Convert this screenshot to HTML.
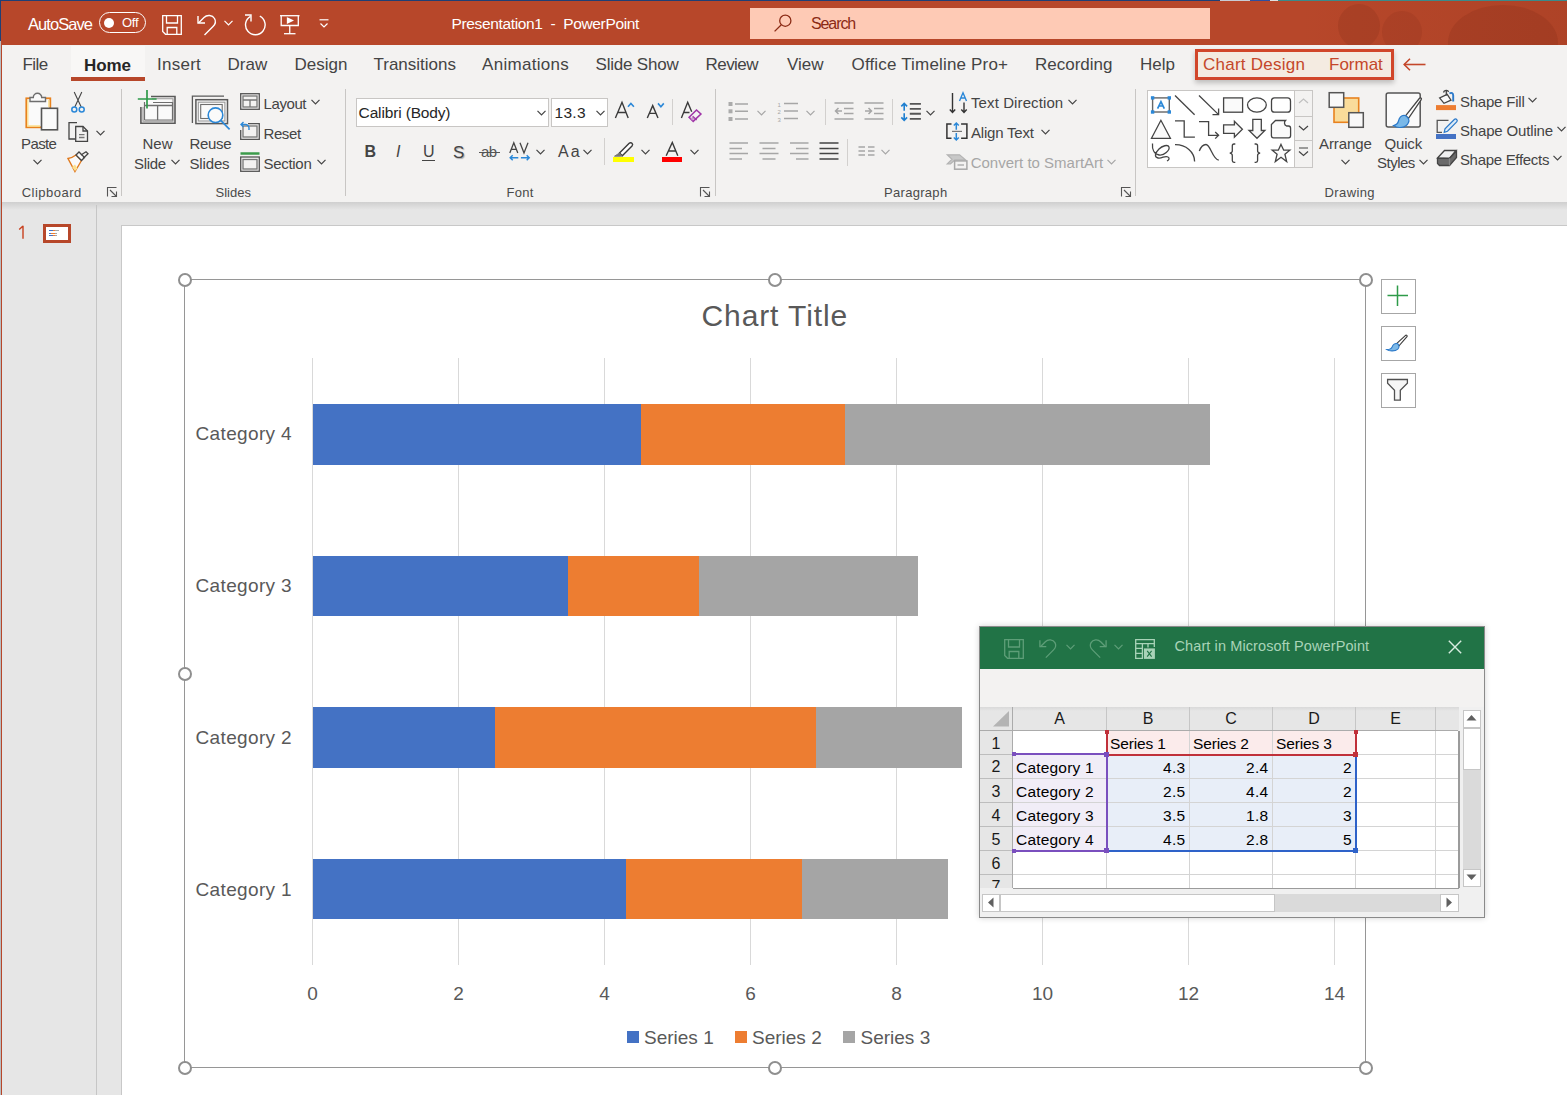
<!DOCTYPE html>
<html><head><meta charset="utf-8">
<style>
*{box-sizing:border-box}
html,body{margin:0;padding:0}
body{width:1567px;height:1095px;overflow:hidden;position:relative;background:#E6E6E6;font-family:"Liberation Sans",sans-serif;color:#262626}
.a{position:absolute}
.t{position:absolute;white-space:nowrap;line-height:1}
svg{position:absolute;overflow:visible}
#title{left:0;top:0;width:1567px;height:45px;background:#B7472A}
#tabs{left:2px;top:45px;width:1565px;height:40px;background:#F3F2F1}
#ribbon{left:2px;top:85px;width:1565px;height:117px;background:#F3F2F1}
.tab{position:absolute;top:56px;font-size:17px;color:#444;white-space:nowrap;line-height:1}
.rl{position:absolute;font-size:15px;color:#444;white-space:nowrap;line-height:1}
.gl{position:absolute;top:186px;font-size:13px;color:#4A4A4A;white-space:nowrap;line-height:1}
.sep{position:absolute;width:1px;background:#C8C6C4}
</style></head>
<body>
<!-- title bar -->
<div class="a" id="title"></div>
<div class="a" style="left:0;top:0;width:1567px;height:1px;background:#1E3F75"></div>
<div class="a" style="left:1220px;top:0;width:30px;height:1px;background:#C8CCD4"></div>
<div class="a" style="left:1250px;top:0;width:20px;height:1px;background:#2D4FA0"></div>
<div class="a" style="left:1270px;top:0;width:8px;height:1px;background:#E0E0E0"></div>
<div class="a" style="left:1278px;top:0;width:289px;height:1px;background:#3A8A8A"></div>
<div class="a" style="left:0;top:0;width:1px;height:41px;background:#1E3F75"></div>
<div class="a" style="left:0;top:41px;width:1px;height:1054px;background:#B9BDC0"></div>
<div class="a" style="left:1px;top:1px;width:1px;height:1094px;background:#B7472A"></div>


<!-- title blobs -->
<div class="a" style="left:1300px;top:1px;width:267px;height:44px;overflow:hidden">
 <div class="a" style="left:0;top:0;width:267px;height:44px;background:linear-gradient(90deg,rgba(110,35,15,0) 0,rgba(110,35,15,0.05) 40%,rgba(110,35,15,0.12) 100%)"></div>
 <div class="a" style="left:38px;top:3px;width:42px;height:44px;border-radius:50%;background:rgba(110,35,15,0.17)"></div>
 <div class="a" style="left:82px;top:10px;width:40px;height:42px;border-radius:50%;background:rgba(110,35,15,0.12)"></div>
 <div class="a" style="left:148px;top:4px;width:110px;height:75px;border-radius:50%;background:rgba(110,35,15,0.17)"></div>
</div>
<div class="t" style="left:28px;top:15.5px;font-size:16.5px;letter-spacing:-0.95px;color:#fff">AutoSave</div>
<div class="a" style="left:99px;top:12px;width:47px;height:21px;border:1.5px solid #fff;border-radius:11px"></div>
<div class="a" style="left:104px;top:17.5px;width:10px;height:10px;border-radius:50%;background:#fff"></div>
<div class="t" style="left:122px;top:16px;font-size:13px;color:#fff;letter-spacing:-0.3px">Off</div>
<!-- save -->
<svg style="left:162px;top:15px" width="20" height="20" viewBox="0 0 20 20" fill="none" stroke="#fff" stroke-width="1.3">
 <path d="M0.7 0.7H19.3V19.3H3.5L0.7 16.5Z"/><path d="M4.5 0.7V8H15.5V0.7"/><path d="M5.2 19.3V12.5H14.8V19.3"/>
</svg>
<!-- undo -->
<svg style="left:197px;top:15px" width="22" height="20" viewBox="0 0 22 20" fill="none" stroke="#fff" stroke-width="1.4">
 <path d="M1 1V8H8"/><path d="M1.5 8L7 2.5C10 -0.5 15.5 0 17.5 3.5C19 6 18.5 9 16 11.5L7.5 20"/>
</svg>
<svg style="left:224px;top:20px" width="9" height="6" viewBox="0 0 9 6" fill="none" stroke="#fff" stroke-width="1.2"><path d="M0.5 0.8L4.5 4.8L8.5 0.8"/></svg>
<!-- redo -->
<svg style="left:244px;top:14px" width="22" height="22" viewBox="0 0 22 22" fill="none" stroke="#fff" stroke-width="1.4">
 <path d="M15.8 2.2A9.8 9.8 0 1 1 6.5 2.4"/><path d="M1 1H7V7.5"/>
</svg>
<!-- present -->
<svg style="left:280px;top:15px" width="20" height="20" viewBox="0 0 20 20" fill="none" stroke="#fff" stroke-width="1.3">
 <path d="M0 0.7H19.5"/><path d="M1.2 0.7V10.5H18.3V0.7"/><path d="M9.75 10.5V18.5"/><path d="M4 18.7H15.5"/><path d="M7.5 3.2L12.5 5.6L7.5 8Z" fill="#fff"/>
</svg>
<svg style="left:319px;top:19px" width="10" height="10" viewBox="0 0 10 10" fill="none" stroke="#fff" stroke-width="1.2"><path d="M0.5 0.8H9.5"/><path d="M1.5 4.5L5 8L8.5 4.5"/></svg>
<div class="t" style="left:451.5px;top:16px;font-size:15.5px;letter-spacing:-0.35px;color:#fff">Presentation1&nbsp; - &nbsp;PowerPoint</div>
<!-- search -->
<div class="a" style="left:750px;top:8px;width:460px;height:31px;background:#FECAB5"></div>
<svg style="left:774px;top:14px" width="18" height="18" viewBox="0 0 18 18" fill="none" stroke="#8B2A14" stroke-width="1.3"><circle cx="11.3" cy="6.7" r="5.6"/><path d="M7.3 10.7L0.6 17.4"/></svg>
<div class="t" style="left:811px;top:16px;font-size:16px;letter-spacing:-1.1px;color:#8B2A14">Search</div>

<!-- tabs -->
<div class="a" id="tabs"></div>
<div class="a" id="ribbon"></div>

<div class="a" style="left:71px;top:46px;width:74px;height:31px;background:#F8F7F6"></div>
<div class="a" style="left:71px;top:77px;width:74px;height:4px;background:#B7472A"></div>
<div class="tab" style="left:22.5px;letter-spacing:-0.6px">File</div>
<div class="tab" style="left:84px;top:56.5px;color:#262626;font-weight:bold;font-size:17px;letter-spacing:-0.1px">Home</div>
<div class="tab" style="left:157px;letter-spacing:0.25px">Insert</div>
<div class="tab" style="left:227.5px">Draw</div>
<div class="tab" style="left:294.5px">Design</div>
<div class="tab" style="left:373.5px">Transitions</div>
<div class="tab" style="left:482px;letter-spacing:0.3px">Animations</div>
<div class="tab" style="left:595.5px;letter-spacing:-0.2px">Slide Show</div>
<div class="tab" style="left:705.5px;letter-spacing:-0.55px">Review</div>
<div class="tab" style="left:787px">View</div>
<div class="tab" style="left:851.5px;letter-spacing:0.17px">Office Timeline Pro+</div>
<div class="tab" style="left:1035px">Recording</div>
<div class="tab" style="left:1140px">Help</div>
<div class="a" style="left:1195px;top:49px;width:199px;height:31px;border:3px solid #D1462A;background:#F4EBE1;box-shadow:0 3px 5px rgba(0,0,0,0.22)"></div>
<div class="tab" style="left:1203px;color:#C4472A;letter-spacing:0.25px">Chart Design</div>
<div class="tab" style="left:1329px;color:#C4472A">Format</div>
<svg style="left:1403px;top:58px" width="23" height="13" viewBox="0 0 23 13" fill="none" stroke="#C4472A" stroke-width="1.6"><path d="M1 6.5H22.5"/><path d="M7 0.8L1.2 6.5L7 12.2"/></svg>

<div class="a" style="left:2px;top:202px;width:1565px;height:8px;background:linear-gradient(#CFCFCF,#E6E6E6)"></div>


<!-- ===== RIBBON: Clipboard ===== -->
<svg style="left:24px;top:91px" width="36" height="40" viewBox="0 0 36 40" fill="none">
 <rect x="2.3" y="7.3" width="24" height="29" stroke="#E8821E" stroke-width="1.8" fill="#FAFAFA"/>
 <path d="M3.8 9V35H16" stroke="#FCE08F" stroke-width="1.3"/>
 <path d="M24.8 9V16" stroke="#FCE08F" stroke-width="1.3"/>
 <path d="M6 10.5V6.5H9.3A4.2 4.2 0 0 1 17.7 6.5H21.5V10.5Z" stroke="#6E6E6E" fill="#FAFAFA" stroke-width="1.4"/>
 <rect x="17.5" y="17.3" width="16" height="21.5" stroke="#555" fill="#FAFAFA" stroke-width="1.6"/>
</svg>
<!-- scissors -->
<svg style="left:70px;top:91px" width="16" height="22" viewBox="0 0 16 22" fill="none" stroke-width="1.1">
 <path d="M4.2 1L11.2 16M11.8 1L4.8 16" stroke="#444"/>
 <circle cx="4.3" cy="18.5" r="2.5" stroke="#2B88D8" stroke-width="1.5"/><circle cx="11.7" cy="18.5" r="2.5" stroke="#2B88D8" stroke-width="1.5"/>
</svg>
<!-- copy -->
<svg style="left:68px;top:122px" width="22" height="21" viewBox="0 0 22 21" fill="none" stroke="#444" stroke-width="1.3">
 <path d="M9 0.7H1V17H7"/><path d="M7.7 4.5H15L19.5 9V19.3H7.7Z" fill="#F3F2F1"/><path d="M15 4.5V9H19.5"/><path d="M11 12.7H16.5M11 15.5H16.5" stroke="#777"/>
</svg>
<svg style="left:96px;top:130px" width="9" height="6" viewBox="0 0 9 6" fill="none" stroke="#444" stroke-width="1.2"><path d="M0.5 0.8L4.5 4.8L8.5 0.8"/></svg>
<!-- format painter -->
<svg style="left:67px;top:151px" width="22" height="22" viewBox="0 0 22 22" fill="none" stroke-width="1.3">
 <path d="M1 7.5C4 7 7 5.5 9 4L14.5 9.5C13 12 12 14 8 20.5Z" stroke="#E07A1E" fill="#FAFAFA" stroke-width="1.4"/>
 <path d="M5 16L8 13.5L10.5 17.5L8 20Z" fill="#FCE08F" stroke="none"/>
 <path d="M9 4L12 1L17.5 6.5L14.5 9.5Z" stroke="#444" fill="#FAFAFA"/>
 <path d="M14 4L19 0.8L21 2.8L16 7.5" stroke="#444"/>
</svg>
<div class="rl" style="left:21px;top:136px;font-size:15px;letter-spacing:-0.6px">Paste</div>
<svg style="left:33px;top:159px" width="9" height="6" viewBox="0 0 9 6" fill="none" stroke="#444" stroke-width="1.2"><path d="M0.5 0.8L4.5 4.8L8.5 0.8"/></svg>
<div class="gl" style="left:21.7px;top:185.8px;letter-spacing:0.5px">Clipboard</div>
<svg style="left:107px;top:187px" width="10" height="10" viewBox="0 0 10 10" fill="none" stroke="#555" stroke-width="1.1"><path d="M0.5 9.5V0.5H9.5"/><path d="M3 3L9 9M9.5 4.5V9.5H4.5"/></svg>
<div class="sep" style="left:121px;top:89px;height:107px"></div>

<!-- ===== RIBBON: Slides ===== -->
<svg style="left:136px;top:89px" width="42" height="38" viewBox="0 0 42 38" fill="none" stroke-width="1.4">
 <path d="M15 7.5H39V34.3H4.9V18" stroke="#5A5A5A" stroke-width="1.6"/>
 <path d="M16 9.7H37V32.2H7V18" stroke="#9A9A9A" stroke-width="1.1"/>
 <rect x="8.3" y="10.8" width="27.5" height="20.3" fill="#FAFAFA" stroke="none"/>
 <path d="M8.5 16.5H36M21.6 16.5V31" stroke="#6E6E6E" stroke-width="1.3"/>
 <path d="M8.5 31V13M17 13.5H36.5V31H8.5" stroke="#6E6E6E" stroke-width="1.2"/>
 <path d="M11 1V19.5M1.8 10H20.6" stroke="#2E9B49" stroke-width="1.7"/>
</svg>
<div class="rl" style="left:142.5px;top:136px;font-size:15px">New</div>
<div class="rl" style="left:134px;top:155.5px;font-size:15px;letter-spacing:-0.3px">Slide</div>
<svg style="left:171px;top:159px" width="9" height="6" viewBox="0 0 9 6" fill="none" stroke="#444" stroke-width="1.2"><path d="M0.5 0.8L4.5 4.8L8.5 0.8"/></svg>
<svg style="left:190px;top:93px" width="42" height="40" viewBox="0 0 42 40" fill="none" stroke="#5A5A5A" stroke-width="1.4">
 <path d="M2.4 30V3.2H34" stroke-width="1.3"/>
 <rect x="5.9" y="6.7" width="31.6" height="23.9" fill="#F8F8F8" stroke-width="1.5"/>
 <rect x="8.3" y="9.2" width="26.6" height="18.8" stroke="#9A9A9A" stroke-width="1.1" fill="#FAFAFA"/>
 <rect x="10.7" y="11.5" width="21.5" height="14" stroke="#6E6E6E" stroke-width="1.1"/>
 <circle cx="25.5" cy="22.2" r="7.3" stroke="#2B88D8" stroke-width="1.6" fill="#FAFAFA"/><path d="M30.7 27.4L39.6 36.4" stroke="#2B88D8" stroke-width="1.7"/>
</svg>
<div class="rl" style="left:189.5px;top:136px;font-size:15px;letter-spacing:-0.3px">Reuse</div>
<div class="rl" style="left:189.5px;top:155.5px;font-size:15px;letter-spacing:-0.15px">Slides</div>
<svg style="left:240px;top:93px" width="20" height="17" viewBox="0 0 20 17" fill="none" stroke="#555" stroke-width="1.3"><rect x="0.7" y="0.7" width="18.6" height="15.6"/><rect x="3" y="3" width="14" height="11" stroke="#777"/><path d="M3 7H17M10 7V14" stroke="#777"/></svg>
<div class="rl" style="left:263.5px;top:96px;font-size:15px;letter-spacing:-0.4px">Layout</div>
<svg style="left:311px;top:99px" width="9" height="6" viewBox="0 0 9 6" fill="none" stroke="#444" stroke-width="1.2"><path d="M0.5 0.8L4.5 4.8L8.5 0.8"/></svg>
<svg style="left:240px;top:121px" width="20" height="19" viewBox="0 0 20 19" fill="none" stroke="#555" stroke-width="1.3"><path d="M8 2.7H19.3V18.3H0.7V9"/><rect x="3" y="5" width="14" height="11" stroke="#777"/><path d="M3.5 1L1 3.5L3.5 6M1.5 3.5H5.5A3.5 3.5 0 0 1 9 7V9" stroke="#2B88D8" stroke-width="1.4"/></svg>
<div class="rl" style="left:263.5px;top:126px;font-size:15px;letter-spacing:-0.4px">Reset</div>
<svg style="left:240px;top:152px" width="20" height="20" viewBox="0 0 20 20" fill="none" stroke="#555" stroke-width="1.3"><path d="M0.5 1.5H19.5" stroke="#3C9B4B" stroke-width="2.5"/><rect x="0.7" y="5" width="18.6" height="14.3"/><rect x="3" y="7.5" width="14" height="9.5" stroke="#777"/></svg>
<div class="rl" style="left:263.5px;top:155.5px;font-size:15px;letter-spacing:-0.3px">Section</div>
<svg style="left:317px;top:159px" width="9" height="6" viewBox="0 0 9 6" fill="none" stroke="#444" stroke-width="1.2"><path d="M0.5 0.8L4.5 4.8L8.5 0.8"/></svg>
<div class="gl" style="left:215.5px;top:185.8px">Slides</div>
<div class="sep" style="left:345px;top:89px;height:107px"></div>


<!-- ===== RIBBON: Font ===== -->
<div class="a" style="left:356px;top:98px;width:193px;height:29px;background:#fff;border:1px solid #C8C6C4"></div>
<div class="rl" style="left:358.6px;top:105px;font-size:15.5px;letter-spacing:-0.15px;color:#262626">Calibri (Body)</div>
<svg style="left:537px;top:110px" width="9" height="6" viewBox="0 0 9 6" fill="none" stroke="#444" stroke-width="1.2"><path d="M0.5 0.8L4.5 4.8L8.5 0.8"/></svg>
<div class="a" style="left:551px;top:98px;width:57px;height:29px;background:#fff;border:1px solid #C8C6C4"></div>
<div class="rl" style="left:554.5px;top:105px;font-size:15.5px;letter-spacing:0.3px;color:#262626">13.3</div>
<svg style="left:596px;top:110px" width="9" height="6" viewBox="0 0 9 6" fill="none" stroke="#444" stroke-width="1.2"><path d="M0.5 0.8L4.5 4.8L8.5 0.8"/></svg>
<svg style="left:612px;top:99px" width="24" height="21" viewBox="0 0 24 21" fill="none" stroke="#3A3A3A" stroke-width="1.4"><path d="M3.4 19L10 3.3L16.2 19M5.6 13.5H14.2"/><path d="M16 7.7L18.9 4.4L21.9 7.7" stroke="#2B88D8" stroke-width="1.6"/></svg>
<svg style="left:645px;top:99px" width="21" height="21" viewBox="0 0 21 21" fill="none" stroke="#3A3A3A" stroke-width="1.4"><path d="M2.3 19L7.7 6.6L13 19M4 14.4H11.4"/><path d="M13 4.4L15.9 7.7L18.8 4.4" stroke="#2B88D8" stroke-width="1.6"/></svg>
<div class="sep" style="left:672px;top:99px;height:26px;background:#D2D0CE"></div>
<svg style="left:679px;top:99px" width="24" height="24" viewBox="0 0 24 24" fill="none" stroke-width="1.4"><path d="M2.4 19L8.7 3.3L12.7 12.8M4.6 13.5H10.5" stroke="#3A3A3A"/><path d="M10.1 18.3L17.5 11L21.9 15L14.2 22.3Z" stroke="#A035A8" fill="#F3F2F1" stroke-width="1.6"/><path d="M11.5 19.7L13.5 17.5L15.6 19.7L13.5 21.5Z" fill="#C89BCB" stroke="none"/><path d="M13.7 17.3L17.7 21" stroke="#A035A8" stroke-width="1.2"/></svg>
<div class="t" style="left:364.5px;top:143.5px;font-size:16px;font-weight:bold;color:#444">B</div>
<div class="t" style="left:396px;top:143.5px;font-size:16px;font-style:italic;color:#444">I</div>
<div class="t" style="left:423px;top:143.5px;font-size:16px;color:#444">U</div>
<div class="a" style="left:422px;top:159.5px;width:13px;height:1.3px;background:#444"></div>
<div class="t" style="left:453px;top:143.5px;font-size:17px;color:#444;text-shadow:1px 1px 1px #AAA">S</div>
<div class="t" style="left:481px;top:144px;font-size:15px;color:#555;letter-spacing:-0.5px">ab</div>
<div class="a" style="left:479px;top:152px;width:21px;height:1.3px;background:#555"></div>
<svg style="left:509px;top:142px" width="22" height="19" viewBox="0 0 22 19" fill="none" stroke-width="1.3"><path d="M0.8 11L4.8 0.8L8.8 11M2.3 7.3H7.3M11 0.8L15 11L19 0.8" stroke="#444"/><path d="M1.2 15.7H9.3M3.7 13.2L1.2 15.7L3.7 18.2M11.9 15.7H20.2M17.7 13.2L20.2 15.7L17.7 18.2" stroke="#2B88D8" stroke-width="1.5"/></svg>
<svg style="left:536px;top:149px" width="9" height="6" viewBox="0 0 9 6" fill="none" stroke="#444" stroke-width="1.2"><path d="M0.5 0.8L4.5 4.8L8.5 0.8"/></svg>
<div class="t" style="left:558px;top:144px;font-size:16px;color:#444;letter-spacing:2px">Aa</div>
<svg style="left:583px;top:149px" width="9" height="6" viewBox="0 0 9 6" fill="none" stroke="#444" stroke-width="1.2"><path d="M0.5 0.8L4.5 4.8L8.5 0.8"/></svg>
<div class="sep" style="left:604px;top:138px;height:27px;background:#D2D0CE"></div>
<svg style="left:612px;top:140px" width="22" height="17" viewBox="0 0 22 17" fill="none" stroke="#3A3A3A" stroke-width="1.4"><path d="M7.5 13L17.2 3.3C18 2.5 19.3 2.5 20 3.3C20.7 4 20.7 5.2 20 6L10.3 15.7Z" fill="#fff"/><path d="M7.2 13.2L10.2 16L8 16.2H2.5Z" fill="#777" stroke="#777" stroke-width="1"/></svg>
<div class="a" style="left:613px;top:157px;width:20.5px;height:5px;background:#FFFF00"></div>
<svg style="left:641px;top:149px" width="9" height="6" viewBox="0 0 9 6" fill="none" stroke="#444" stroke-width="1.2"><path d="M0.5 0.8L4.5 4.8L8.5 0.8"/></svg>
<svg style="left:665px;top:141px" width="14" height="16" viewBox="0 0 14 16" fill="none" stroke="#3A3A3A" stroke-width="1.4"><path d="M1.2 14.8L7.3 1.5L12.8 14.8M3.2 10H10.8"/></svg>
<div class="a" style="left:662px;top:157px;width:20px;height:5px;background:#FF0000"></div>
<svg style="left:690px;top:149px" width="9" height="6" viewBox="0 0 9 6" fill="none" stroke="#444" stroke-width="1.2"><path d="M0.5 0.8L4.5 4.8L8.5 0.8"/></svg>
<div class="gl" style="left:506.5px;top:185.8px;letter-spacing:0.3px">Font</div>
<svg style="left:700px;top:187px" width="10" height="10" viewBox="0 0 10 10" fill="none" stroke="#555" stroke-width="1.1"><path d="M0.5 9.5V0.5H9.5"/><path d="M3 3L9 9M9.5 4.5V9.5H4.5"/></svg>
<div class="sep" style="left:714.5px;top:89px;height:107px"></div>


<!-- ===== RIBBON: Paragraph ===== -->
<svg style="left:728px;top:102px" width="22" height="20" viewBox="0 0 22 20" fill="none" stroke="#A6A6A6" stroke-width="1.5"><rect x="0.5" y="0" width="4" height="4" fill="#ABABAB" stroke="none"/><rect x="0.5" y="7.3" width="4" height="4" fill="#ABABAB" stroke="none"/><rect x="0.5" y="15" width="4" height="4" fill="#ABABAB" stroke="none"/><path d="M7 2H20M7 9.3H20M7 17H20"/></svg>
<svg style="left:757px;top:110px" width="9" height="6" viewBox="0 0 9 6" fill="none" stroke="#A6A6A6" stroke-width="1.2"><path d="M0.5 0.8L4.5 4.8L8.5 0.8"/></svg>
<svg style="left:777px;top:101px" width="22" height="21" viewBox="0 0 22 21" fill="none" stroke="#A6A6A6" stroke-width="1.5"><path d="M7 2.5H21M7 10H21M7 17.5H21"/><text x="0.5" y="5.5" font-size="6" fill="#A6A6A6" stroke="none" font-family="Liberation Sans">1</text><text x="0.5" y="13" font-size="6" fill="#A6A6A6" stroke="none" font-family="Liberation Sans">2</text><text x="0.5" y="20.5" font-size="6" fill="#A6A6A6" stroke="none" font-family="Liberation Sans">3</text></svg>
<svg style="left:806px;top:110px" width="9" height="6" viewBox="0 0 9 6" fill="none" stroke="#A6A6A6" stroke-width="1.2"><path d="M0.5 0.8L4.5 4.8L8.5 0.8"/></svg>
<div class="sep" style="left:825px;top:99px;height:26px;background:#D2D0CE"></div>
<svg style="left:834px;top:102px" width="20" height="18" viewBox="0 0 20 18" fill="none" stroke="#A6A6A6" stroke-width="1.5"><path d="M0.5 1H19.5M10 6.5H19.5M10 11.5H19.5M0.5 17H19.5"/><path d="M8 9H1.5M4.5 6L1.5 9L4.5 12"/></svg>
<svg style="left:864px;top:102px" width="20" height="18" viewBox="0 0 20 18" fill="none" stroke="#A6A6A6" stroke-width="1.5"><path d="M0.5 1H19.5M10 6.5H19.5M10 11.5H19.5M0.5 17H19.5"/><path d="M1 9H7.5M4.5 6L7.5 9L4.5 12"/></svg>
<div class="sep" style="left:892px;top:99px;height:26px;background:#D2D0CE"></div>
<svg style="left:900px;top:101px" width="22" height="21" viewBox="0 0 22 21" fill="none" stroke-width="1.5"><path d="M9.8 2.9H20.9M9.8 7.9H20.9M9.8 12.8H20.9M9.8 17.9H20.9" stroke="#555" stroke-width="1.9"/><path d="M4.2 9.7V2.6M1.3 5.4L4.2 2.4L7.1 5.4M4.2 12.2V19.3M1.3 16.4L4.2 19.4L7.1 16.4" stroke="#1E7FD0" stroke-width="1.6"/></svg>
<svg style="left:925.5px;top:109.5px" width="9" height="6" viewBox="0 0 9 6" fill="none" stroke="#444" stroke-width="1.2"><path d="M0.5 0.8L4.5 4.8L8.5 0.8"/></svg>
<svg style="left:729px;top:142px" width="20" height="18" viewBox="0 0 20 18" fill="none" stroke="#A6A6A6" stroke-width="1.5"><path d="M0.5 1H19M0.5 6.5H13M0.5 11.5H19M0.5 17H13"/></svg>
<svg style="left:759px;top:142px" width="20" height="18" viewBox="0 0 20 18" fill="none" stroke="#A6A6A6" stroke-width="1.5"><path d="M0.5 1H19.5M3.5 6.5H16.5M0.5 11.5H19.5M3.5 17H16.5"/></svg>
<svg style="left:789px;top:142px" width="20" height="18" viewBox="0 0 20 18" fill="none" stroke="#A6A6A6" stroke-width="1.5"><path d="M1 1H19.5M7 6.5H19.5M1 11.5H19.5M7 17H19.5"/></svg>
<svg style="left:819px;top:142px" width="20" height="18" viewBox="0 0 20 18" fill="none" stroke="#444" stroke-width="1.6"><path d="M0.5 1H19.5M0.5 6.5H19.5M0.5 11.5H19.5M0.5 17H19.5"/></svg>
<div class="sep" style="left:847px;top:139px;height:27px;background:#D2D0CE"></div>
<svg style="left:858px;top:146px" width="17" height="10" viewBox="0 0 17 10" fill="none" stroke="#A6A6A6" stroke-width="1.4"><path d="M0.5 1H7M0.5 5H7M0.5 9H7M10 1H16.5M10 5H16.5M10 9H16.5"/></svg>
<svg style="left:881px;top:149px" width="9" height="6" viewBox="0 0 9 6" fill="none" stroke="#A6A6A6" stroke-width="1.2"><path d="M0.5 0.8L4.5 4.8L8.5 0.8"/></svg>
<!-- text direction -->
<svg style="left:949px;top:91.5px" width="20" height="22" viewBox="0 0 20 22" fill="none" stroke-width="1.4"><path d="M3.5 1V20.5M0.8 17.5L3.5 20.5L6.2 17.5M15 10.5V20.5M12.3 17.5L15 20.5L17.7 17.5" stroke="#333"/><path d="M10.5 9L14 0.8L17.5 9M11.7 6H16.3" stroke="#2B88D8"/></svg>
<div class="rl" style="left:971px;top:95px;font-size:15px;letter-spacing:0.1px">Text Direction</div>
<svg style="left:1068px;top:99px" width="9" height="6" viewBox="0 0 9 6" fill="none" stroke="#444" stroke-width="1.2"><path d="M0.5 0.8L4.5 4.8L8.5 0.8"/></svg>
<svg style="left:946px;top:122px" width="22" height="20" viewBox="0 0 22 20" fill="none" stroke-width="1.4"><path d="M5.5 2.1H0.9V16.3H5.5M15.1 2.1H20.9V16.3H15.1" stroke="#333" stroke-width="1.5"/><path d="M6 9.4H16" stroke="#777" stroke-width="1.2"/><path d="M10.3 7.8V1M7.8 3.5L10.3 1L12.8 3.5M10.3 11V18M7.8 15.5L10.3 18L12.8 15.5" stroke="#2B88D8" stroke-width="1.5"/></svg>
<div class="rl" style="left:971px;top:125px;font-size:15px;letter-spacing:-0.2px">Align Text</div>
<svg style="left:1041px;top:129px" width="9" height="6" viewBox="0 0 9 6" fill="none" stroke="#444" stroke-width="1.2"><path d="M0.5 0.8L4.5 4.8L8.5 0.8"/></svg>
<svg style="left:947px;top:153px" width="21" height="17" viewBox="0 0 21 17" fill="none" stroke-width="1.2"><path d="M0.3 1.8H12.6L18.5 6.8H8L3.5 10.8H0.3L5 6.3Z" fill="#C8C8C8" stroke="#B4B4B4"/><rect x="7.6" y="7.9" width="12.3" height="8.3" stroke="#A8A8A8" fill="#F3F2F1" stroke-width="1.5"/><path d="M10.5 12H17" stroke="#B0B0B0" stroke-width="1.5"/></svg>
<div class="rl" style="left:970.7px;top:155px;font-size:15px;letter-spacing:0px;color:#A6A6A6">Convert to SmartArt</div>
<svg style="left:1107px;top:159px" width="9" height="6" viewBox="0 0 9 6" fill="none" stroke="#A6A6A6" stroke-width="1.2"><path d="M0.5 0.8L4.5 4.8L8.5 0.8"/></svg>
<div class="gl" style="left:884px;top:185.8px;letter-spacing:0.3px">Paragraph</div>
<svg style="left:1121px;top:187px" width="10" height="10" viewBox="0 0 10 10" fill="none" stroke="#555" stroke-width="1.1"><path d="M0.5 9.5V0.5H9.5"/><path d="M3 3L9 9M9.5 4.5V9.5H4.5"/></svg>
<div class="sep" style="left:1135px;top:89px;height:107px"></div>


<!-- ===== RIBBON: Drawing ===== -->
<div class="a" style="left:1147px;top:90px;width:166px;height:78px;background:#fff;border:1px solid #C8C6C4"></div>
<div class="a" style="left:1294px;top:90px;width:19px;height:78px;background:#F3F2F1;border:1px solid #C8C6C4"></div>
<div class="a" style="left:1294px;top:116px;width:19px;height:1px;background:#C8C6C4"></div>
<div class="a" style="left:1294px;top:140px;width:19px;height:1px;background:#C8C6C4"></div>
<svg style="left:1298px;top:98px" width="11" height="6" viewBox="0 0 11 6" fill="none" stroke="#C0C0C0" stroke-width="1.2"><path d="M1 5L5.5 1L10 5"/></svg>
<svg style="left:1298px;top:125px" width="11" height="6" viewBox="0 0 11 6" fill="none" stroke="#444" stroke-width="1.2"><path d="M1 1L5.5 5L10 1"/></svg>
<svg style="left:1298px;top:147px" width="11" height="10" viewBox="0 0 11 10" fill="none" stroke="#444" stroke-width="1.2"><path d="M1 1H10M1 4.5L5.5 8.5L10 4.5"/></svg>
<svg style="left:1150px;top:95px" width="145" height="72" viewBox="0 0 145 72" fill="none" stroke="#444" stroke-width="1.3">
 <rect x="2.6" y="2.9" width="16.7" height="14.1" stroke="#666" stroke-width="1.4"/>
 <rect x="0.9" y="1.2" width="3.4" height="3.4" fill="#2B88D8" stroke="none"/><rect x="17.6" y="1.2" width="3.4" height="3.4" fill="#2B88D8" stroke="none"/><rect x="0.9" y="15.3" width="3.4" height="3.4" fill="#2B88D8" stroke="none"/><rect x="17.6" y="15.3" width="3.4" height="3.4" fill="#2B88D8" stroke="none"/>
 <path d="M7.6 13.6L10.95 6.6L14.3 13.6M8.9 11H13" stroke="#2B88D8" stroke-width="1.7"/>
 <path d="M25 0.5L44.6 19.8"/>
 <path d="M49 0.5L68.6 19.6M68.6 13.5V19.6H62.5"/>
 <rect x="73.6" y="2.9" width="19" height="14.3" fill="#FAFAFA"/>
 <ellipse cx="106.9" cy="10" rx="9.4" ry="7.1"/>
 <rect x="121.5" y="2.9" width="19" height="14.3" rx="3"/>
 <path d="M1.5 43.3L10.9 25.3L20.4 43.3Z" fill="#FAFAFA"/>
 <path d="M25 25.9H34.2V42.2H44.9"/>
 <path d="M49 26.7H58.6V40.3H68.6M65.2 37L68.6 40.3L65.2 43.6"/>
 <path d="M73.6 29.8H84.4V26.2L92.4 34.2L84.4 42.2V38.4H73.6Z" fill="#FAFAFA"/>
 <path d="M102.8 24.4H111.3V35.5H114.9L107 43.3L99 35.5H102.8Z" fill="#FAFAFA"/>
 <path d="M125.5 25.5H135.5C134 27 134 30 136.5 31H138.5C140 31 140.6 32 140.6 33.5V40.5C140.6 42 140 42.8 138.5 42.8H123.5C122 42.8 121.4 42 121.4 40.5V29.5Z" fill="#FAFAFA"/>
 <path d="M2.5 48.5C2 54 4 59 9 60C14 61 20 55 19 52C18 49 12 51 9 54C5 58 4 62 8 63C12 64 15 60 18 62C20 63 19 65 17 66" />
 <path d="M25 49.7C36 49.5 44.5 57 44.6 66.4"/>
 <path d="M49.3 56C51 51.5 53.5 49.5 56 49.5C60.5 49.5 62.5 64.5 68.8 65.2"/>
 <path d="M85.3 49H84C82.7 49 82.3 49.8 82.3 51V56C82.3 57.3 81.5 57.9 79.8 58.2C81.5 58.5 82.3 59.1 82.3 60.4V65.5C82.3 66.7 82.7 67.3 84 67.3H85.3"/>
 <path d="M104.6 49H105.9C107.2 49 107.6 49.8 107.6 51V56C107.6 57.3 108.4 57.9 110.1 58.2C108.4 58.5 107.6 59.1 107.6 60.4V65.5C107.6 66.7 107.2 67.3 105.9 67.3H104.6"/>
 <path d="M131 49.4L133.7 55.2H139.8L134.9 59.2L136.7 66.6L131 62.3L125.3 66.6L127.1 59.2L122.2 55.2H128.3Z" fill="#FAFAFA"/>
</svg>
<svg style="left:1327px;top:91px" width="38" height="38" viewBox="0 0 38 38" fill="none" stroke-width="1.3">
 <rect x="7" y="7" width="24.7" height="24.3" stroke="#E8821E" fill="#F9DC9A" stroke-width="1.6"/>
 <rect x="2.2" y="1.7" width="14.5" height="14.6" stroke="#555" fill="#F8F8F8" stroke-width="1.5"/>
 <rect x="21.8" y="21.7" width="14.5" height="14.6" stroke="#555" fill="#F8F8F8" stroke-width="1.5"/>
</svg>
<div class="rl" style="left:1319px;top:135.5px;font-size:15px;letter-spacing:-0.1px">Arrange</div>
<svg style="left:1341px;top:159px" width="9" height="6" viewBox="0 0 9 6" fill="none" stroke="#444" stroke-width="1.2"><path d="M0.5 0.8L4.5 4.8L8.5 0.8"/></svg>
<svg style="left:1384px;top:91px" width="40" height="40" viewBox="0 0 40 40" fill="none" stroke-width="1.4">
 <rect x="2.2" y="2" width="34" height="34" rx="2" stroke="#555" fill="#FAFAFA" stroke-width="1.5"/>
 <path d="M35.3 7.5C36.5 6.3 38 7.3 37.2 8.7L24.5 27.3L21.5 24.8Z" stroke="#444" fill="#fff" stroke-width="1.3"/>
 <path d="M21.3 24.5C17 23.5 15 27.5 14.5 30C14 32 12.5 34 9.5 34.5C13.5 37.5 22 37.5 24.5 31.5C25.3 29.5 24.5 26.5 21.3 24.5Z" stroke="#2B79C9" fill="#79B8E8" stroke-width="1.2"/>
</svg>
<div class="rl" style="left:1384.6px;top:135.5px;font-size:15px;letter-spacing:-0.2px">Quick</div>
<div class="rl" style="left:1377px;top:155px;font-size:15px;letter-spacing:-0.5px">Styles</div>
<svg style="left:1419px;top:159px" width="9" height="6" viewBox="0 0 9 6" fill="none" stroke="#444" stroke-width="1.2"><path d="M0.5 0.8L4.5 4.8L8.5 0.8"/></svg>
<svg style="left:1436px;top:89px" width="21" height="22" viewBox="0 0 21 22" fill="none" stroke-width="1.3">
 <path d="M3.6 8.9L8 14.3L15 11.2L11.2 5.3Z" stroke="#444" fill="#FAFAFA"/>
 <path d="M10.3 1.2V6.5M7.5 3.5C8 1 12 0.5 12.5 3" stroke="#444"/>
 <path d="M13.5 4.5C15.5 3.2 17.2 4.2 17.2 6.5V12.5" stroke="#2B79C9" stroke-width="1.9"/>
 <rect x="0" y="16.1" width="20" height="5" fill="#ED7D31" stroke="none"/>
</svg>
<div class="rl" style="left:1459.9px;top:93.8px;font-size:15px;letter-spacing:-0.2px">Shape Fill</div>
<svg style="left:1528px;top:97px" width="9" height="6" viewBox="0 0 9 6" fill="none" stroke="#444" stroke-width="1.2"><path d="M0.5 0.8L4.5 4.8L8.5 0.8"/></svg>
<svg style="left:1436px;top:118px" width="22" height="22" viewBox="0 0 22 22" fill="none" stroke-width="1.3">
 <path d="M12.5 2.4H1.2V14.4H6" stroke="#555"/>
 <path d="M8.2 14.3L9 10.8L18.3 1.5C19 0.8 20 0.8 20.7 1.5C21.4 2.2 21.4 3.2 20.7 3.9L11.5 13.2Z" stroke="#2B79C9" fill="#DDEBF7" stroke-width="1.2"/>
 <rect x="0" y="16" width="20" height="5" fill="#4472C4" stroke="none"/>
</svg>
<div class="rl" style="left:1459.9px;top:122.5px;font-size:15px;letter-spacing:-0.15px">Shape Outline</div>
<svg style="left:1557px;top:126px" width="9" height="6" viewBox="0 0 9 6" fill="none" stroke="#444" stroke-width="1.2"><path d="M0.5 0.8L4.5 4.8L8.5 0.8"/></svg>
<svg style="left:1436px;top:149px" width="22" height="18" viewBox="0 0 22 18" fill="none" stroke="#444" stroke-width="1.3">
 <path d="M1.5 9L8.5 1.5H20L13.5 9.3Z" fill="#F0F0F0"/>
 <path d="M1.5 9V14.5L3.5 16.5H13.5L20.5 8.5V2L13.5 9.3H1.5Z" fill="#6A6A6A"/>
 <path d="M13.5 9.3V16.5" stroke="#888"/>
</svg>
<div class="rl" style="left:1459.9px;top:151.5px;font-size:15px;letter-spacing:-0.3px">Shape Effects</div>
<svg style="left:1553px;top:155px" width="9" height="6" viewBox="0 0 9 6" fill="none" stroke="#444" stroke-width="1.2"><path d="M0.5 0.8L4.5 4.8L8.5 0.8"/></svg>
<div class="gl" style="left:1324.5px;top:185.8px;letter-spacing:0.4px">Drawing</div>

<!-- workspace -->
<div class="a" style="left:96px;top:205px;width:1px;height:890px;background:#C6C6C6"></div>
<div class="a" style="left:121px;top:225px;width:1446px;height:870px;background:#fff;border-left:1px solid #C8C8C8;border-top:1px solid #C8C8C8"></div>


<!-- thumbnail -->
<svg style="left:18px;top:225px" width="8" height="15" viewBox="0 0 8 15" fill="none" stroke="#C8401E" stroke-width="1.4"><path d="M5 0.8V13.8M1.2 4.6L5 1"/></svg>
<div class="a" style="left:43px;top:224px;width:28px;height:19px;border:3px solid #B7472A;background:#fff"></div>
<div class="a" style="left:49px;top:230px;width:4px;height:1.3px;background:#4472C4"></div><div class="a" style="left:53px;top:230px;width:2px;height:1.3px;background:#ED7D31"></div><div class="a" style="left:55px;top:230px;width:4px;height:1.3px;background:#A5A5A5"></div>
<div class="a" style="left:49px;top:233px;width:2px;height:1.3px;background:#4472C4"></div><div class="a" style="left:51px;top:233px;width:4px;height:1.3px;background:#ED7D31"></div><div class="a" style="left:55px;top:233px;width:2px;height:1.3px;background:#A5A5A5"></div>
<div class="a" style="left:49px;top:235px;width:4px;height:1.3px;background:#4472C4"></div><div class="a" style="left:53px;top:235px;width:2px;height:1.3px;background:#ED7D31"></div><div class="a" style="left:55px;top:235px;width:1.5px;height:1.3px;background:#A5A5A5"></div>
<!-- chart -->
<div class="a" style="left:184px;top:279px;width:1182px;height:789px;border:1px solid #969696"></div>
<div class="a" style="left:312.00px;top:358px;width:1px;height:607px;background:#D9D9D9"></div>
<div class="a" style="left:458.00px;top:358px;width:1px;height:607px;background:#D9D9D9"></div>
<div class="a" style="left:604.00px;top:358px;width:1px;height:607px;background:#D9D9D9"></div>
<div class="a" style="left:750.00px;top:358px;width:1px;height:607px;background:#D9D9D9"></div>
<div class="a" style="left:896.00px;top:358px;width:1px;height:607px;background:#D9D9D9"></div>
<div class="a" style="left:1042.00px;top:358px;width:1px;height:607px;background:#D9D9D9"></div>
<div class="a" style="left:1188.00px;top:358px;width:1px;height:607px;background:#D9D9D9"></div>
<div class="a" style="left:1334.00px;top:358px;width:1px;height:607px;background:#D9D9D9"></div>
<div class="a" style="left:312.50px;top:404.0px;width:328.50px;height:60.6px;background:#4472C4"></div>
<div class="a" style="left:641.00px;top:404.0px;width:204.40px;height:60.6px;background:#ED7D31"></div>
<div class="a" style="left:845.40px;top:404.0px;width:365.00px;height:60.6px;background:#A5A5A5"></div>
<div class="t" style="left:92px;top:423.9px;width:200px;text-align:right;font-size:19px;color:#595959;letter-spacing:0.35px">Category 4</div>
<div class="a" style="left:312.50px;top:555.6px;width:255.50px;height:60.6px;background:#4472C4"></div>
<div class="a" style="left:568.00px;top:555.6px;width:131.40px;height:60.6px;background:#ED7D31"></div>
<div class="a" style="left:699.40px;top:555.6px;width:219.00px;height:60.6px;background:#A5A5A5"></div>
<div class="t" style="left:92px;top:575.9px;width:200px;text-align:right;font-size:19px;color:#595959;letter-spacing:0.35px">Category 3</div>
<div class="a" style="left:312.50px;top:707.2px;width:182.50px;height:60.6px;background:#4472C4"></div>
<div class="a" style="left:495.00px;top:707.2px;width:321.20px;height:60.6px;background:#ED7D31"></div>
<div class="a" style="left:816.20px;top:707.2px;width:146.00px;height:60.6px;background:#A5A5A5"></div>
<div class="t" style="left:92px;top:727.9px;width:200px;text-align:right;font-size:19px;color:#595959;letter-spacing:0.35px">Category 2</div>
<div class="a" style="left:312.50px;top:858.8px;width:313.90px;height:60.6px;background:#4472C4"></div>
<div class="a" style="left:626.40px;top:858.8px;width:175.20px;height:60.6px;background:#ED7D31"></div>
<div class="a" style="left:801.60px;top:858.8px;width:146.00px;height:60.6px;background:#A5A5A5"></div>
<div class="t" style="left:92px;top:879.9px;width:200px;text-align:right;font-size:19px;color:#595959;letter-spacing:0.35px">Category 1</div>
<div class="t" style="left:262.50px;top:983.9px;width:100px;text-align:center;font-size:19px;color:#595959">0</div>
<div class="t" style="left:408.50px;top:983.9px;width:100px;text-align:center;font-size:19px;color:#595959">2</div>
<div class="t" style="left:554.50px;top:983.9px;width:100px;text-align:center;font-size:19px;color:#595959">4</div>
<div class="t" style="left:700.50px;top:983.9px;width:100px;text-align:center;font-size:19px;color:#595959">6</div>
<div class="t" style="left:846.50px;top:983.9px;width:100px;text-align:center;font-size:19px;color:#595959">8</div>
<div class="t" style="left:992.50px;top:983.9px;width:100px;text-align:center;font-size:19px;color:#595959">10</div>
<div class="t" style="left:1138.50px;top:983.9px;width:100px;text-align:center;font-size:19px;color:#595959">12</div>
<div class="t" style="left:1284.50px;top:983.9px;width:100px;text-align:center;font-size:19px;color:#595959">14</div>

<div class="t" style="left:701.5px;top:300.5px;font-size:30px;color:#595959;letter-spacing:0.9px">Chart Title</div>
<div class="a" style="left:627px;top:1031px;width:12px;height:12px;background:#4472C4"></div>
<div class="t" style="left:644px;top:1027.8px;font-size:19px;color:#595959">Series 1</div>
<div class="a" style="left:735px;top:1031px;width:12px;height:12px;background:#ED7D31"></div>
<div class="t" style="left:752px;top:1027.8px;font-size:19px;color:#595959">Series 2</div>
<div class="a" style="left:843px;top:1031px;width:12px;height:12px;background:#A5A5A5"></div>
<div class="t" style="left:860.5px;top:1027.8px;font-size:19px;color:#595959">Series 3</div>
<div class="a" style="left:178px;top:273px;width:14px;height:14px;border-radius:50%;border:2.2px solid #8F8F8F;background:#fff"></div>
<div class="a" style="left:768px;top:273px;width:14px;height:14px;border-radius:50%;border:2.2px solid #8F8F8F;background:#fff"></div>
<div class="a" style="left:1359px;top:273px;width:14px;height:14px;border-radius:50%;border:2.2px solid #8F8F8F;background:#fff"></div>
<div class="a" style="left:178px;top:667px;width:14px;height:14px;border-radius:50%;border:2.2px solid #8F8F8F;background:#fff"></div>
<div class="a" style="left:1359px;top:667px;width:14px;height:14px;border-radius:50%;border:2.2px solid #8F8F8F;background:#fff"></div>
<div class="a" style="left:178px;top:1061px;width:14px;height:14px;border-radius:50%;border:2.2px solid #8F8F8F;background:#fff"></div>
<div class="a" style="left:768px;top:1061px;width:14px;height:14px;border-radius:50%;border:2.2px solid #8F8F8F;background:#fff"></div>
<div class="a" style="left:1359px;top:1061px;width:14px;height:14px;border-radius:50%;border:2.2px solid #8F8F8F;background:#fff"></div>

<!-- side buttons -->
<div class="a" style="left:1381px;top:279px;width:35px;height:35px;border:1px solid #A6A6A6;background:#fff"></div>
<svg style="left:1387px;top:285px" width="22" height="22" viewBox="0 0 22 22" fill="none" stroke="#2E9B49" stroke-width="1.5"><path d="M10.5 0.5V21M0.5 10.5H21"/></svg>
<div class="a" style="left:1381px;top:326px;width:35px;height:35px;border:1px solid #A6A6A6;background:#fff"></div>
<svg style="left:1386px;top:334px" width="22" height="18" viewBox="0 0 22 18" fill="none"><path d="M10.3 9.8L19.3 1.6C20.3 0.7 21.8 1.5 21 2.7L13 11.8Z" stroke="#3A3A3A" fill="#fff" stroke-width="1.1"/><path d="M11.8 9.8C8.8 8.9 6.8 10.6 6.3 12.6C5.8 14.1 3.8 15.5 0.8 15.6C3.2 17.3 9.2 17.5 11.8 15.1C13.3 13.6 13.4 11.3 11.8 9.8Z" stroke="#2B79C9" fill="#7DB9E8" stroke-width="1.1"/></svg>
<div class="a" style="left:1381px;top:373px;width:35px;height:35px;border:1px solid #A6A6A6;background:#fff"></div>
<svg style="left:1387px;top:378px" width="22" height="24" viewBox="0 0 22 24" fill="none" stroke="#505050" stroke-width="1.3"><path d="M0.6 1.5H20.4V5.3L13.3 12.3V22.2H7.5V12.3L0.6 5.3Z" fill="#F6F6F6"/></svg>


<!-- ===== EXCEL WINDOW ===== -->
<div class="a" style="left:978.5px;top:625.5px;width:506.5px;height:292.0px;background:#F0F0F0;border:1px solid #8A8A8A;box-shadow:0 0 6px rgba(0,0,0,0.18)"></div>
<div class="a" style="left:979.5px;top:626.5px;width:504.5px;height:42.5px;background:#217346"></div>
<div class="a" style="left:979.5px;top:669px;width:504.5px;height:38px;background:#F3F2F1"></div>
<div class="a" style="left:979.5px;top:707px;width:479.9000000000001px;height:23.5px;background:linear-gradient(#D9D9D9,#E6E6E6 4px)"></div>
<div class="a" style="left:979.5px;top:730.5px;width:33.0px;height:157.79999999999995px;background:#E6E6E6"></div>
<div class="a" style="left:1012.5px;top:730.5px;width:445.9000000000001px;height:157.79999999999995px;background:#fff"></div>
<div class="a" style="left:1106.5px;top:730.5px;width:249.29999999999995px;height:23.700000000000045px;background:#FBEBEB"></div>
<div class="a" style="left:1012.5px;top:754.2px;width:94.0px;height:96.5px;background:#F1EDF7"></div>
<div class="a" style="left:1106.5px;top:754.2px;width:249.29999999999995px;height:96.5px;background:#E8EEF8"></div>
<div class="a" style="left:1106.0px;top:730.5px;width:1px;height:157.79999999999995px;background:#D4D4D4"></div>
<div class="a" style="left:1106.0px;top:707px;width:1px;height:23.5px;background:#C6C6C6"></div>
<div class="a" style="left:1189.0px;top:730.5px;width:1px;height:157.79999999999995px;background:#D4D4D4"></div>
<div class="a" style="left:1189.0px;top:707px;width:1px;height:23.5px;background:#C6C6C6"></div>
<div class="a" style="left:1272.0px;top:730.5px;width:1px;height:157.79999999999995px;background:#D4D4D4"></div>
<div class="a" style="left:1272.0px;top:707px;width:1px;height:23.5px;background:#C6C6C6"></div>
<div class="a" style="left:1355.3px;top:730.5px;width:1px;height:157.79999999999995px;background:#D4D4D4"></div>
<div class="a" style="left:1355.3px;top:707px;width:1px;height:23.5px;background:#C6C6C6"></div>
<div class="a" style="left:1435.1px;top:730.5px;width:1px;height:157.79999999999995px;background:#D4D4D4"></div>
<div class="a" style="left:1435.1px;top:707px;width:1px;height:23.5px;background:#C6C6C6"></div>
<div class="a" style="left:1012.5px;top:753.7px;width:445.9000000000001px;height:1px;background:#D4D4D4"></div>
<div class="a" style="left:979.5px;top:753.7px;width:33.0px;height:1px;background:#BDBDBD"></div>
<div class="a" style="left:1012.5px;top:777.9px;width:445.9000000000001px;height:1px;background:#D4D4D4"></div>
<div class="a" style="left:979.5px;top:777.9px;width:33.0px;height:1px;background:#BDBDBD"></div>
<div class="a" style="left:1012.5px;top:802.1px;width:445.9000000000001px;height:1px;background:#D4D4D4"></div>
<div class="a" style="left:979.5px;top:802.1px;width:33.0px;height:1px;background:#BDBDBD"></div>
<div class="a" style="left:1012.5px;top:826.2px;width:445.9000000000001px;height:1px;background:#D4D4D4"></div>
<div class="a" style="left:979.5px;top:826.2px;width:33.0px;height:1px;background:#BDBDBD"></div>
<div class="a" style="left:1012.5px;top:850.2px;width:445.9000000000001px;height:1px;background:#D4D4D4"></div>
<div class="a" style="left:979.5px;top:850.2px;width:33.0px;height:1px;background:#BDBDBD"></div>
<div class="a" style="left:1012.5px;top:873.9px;width:445.9000000000001px;height:1px;background:#D4D4D4"></div>
<div class="a" style="left:979.5px;top:873.9px;width:33.0px;height:1px;background:#BDBDBD"></div>
<div class="a" style="left:1012.0px;top:707px;width:1px;height:181.29999999999995px;background:#ABABAB"></div>
<div class="a" style="left:979.5px;top:730px;width:478.9000000000001px;height:1px;background:#ABABAB"></div>
<div class="a" style="left:1012.5px;top:887.8px;width:446.9000000000001px;height:1.2px;background:#9B9B9B"></div>
<div class="a" style="left:1458.4px;top:730.5px;width:1.2px;height:157.79999999999995px;background:#9B9B9B"></div>
<svg style="left:993px;top:711px" width="17" height="16" viewBox="0 0 17 16"><path d="M16 0V15.5H0Z" fill="#B4B4B4"/></svg>
<div class="t" style="left:1029.5px;top:711px;width:60px;text-align:center;font-size:16px;color:#1a1a1a">A</div>
<div class="t" style="left:1118.0px;top:711px;width:60px;text-align:center;font-size:16px;color:#1a1a1a">B</div>
<div class="t" style="left:1201.0px;top:711px;width:60px;text-align:center;font-size:16px;color:#1a1a1a">C</div>
<div class="t" style="left:1284.15px;top:711px;width:60px;text-align:center;font-size:16px;color:#1a1a1a">D</div>
<div class="t" style="left:1365.6999999999998px;top:711px;width:60px;text-align:center;font-size:16px;color:#1a1a1a">E</div>
<div class="t" style="left:979.5px;top:735.6px;width:33.0px;text-align:center;font-size:16px;color:#1a1a1a">1</div>
<div class="t" style="left:979.5px;top:759.3px;width:33.0px;text-align:center;font-size:16px;color:#1a1a1a">2</div>
<div class="t" style="left:979.5px;top:783.5px;width:33.0px;text-align:center;font-size:16px;color:#1a1a1a">3</div>
<div class="t" style="left:979.5px;top:807.7px;width:33.0px;text-align:center;font-size:16px;color:#1a1a1a">4</div>
<div class="t" style="left:979.5px;top:831.8px;width:33.0px;text-align:center;font-size:16px;color:#1a1a1a">5</div>
<div class="t" style="left:979.5px;top:855.8px;width:33.0px;text-align:center;font-size:16px;color:#1a1a1a">6</div>
<div class="a" style="left:979.5px;top:874.4px;width:33.0px;height:13.899999999999977px;overflow:hidden"><div class="t" style="left:0;top:5.1px;width:33.0px;text-align:center;font-size:16px;color:#1a1a1a">7</div></div>
<div class="a" style="left:1105.5px;top:730.5px;width:251.29999999999995px;height:25.200000000000045px;border:2px solid #C0303A;border-top:none"></div>
<div class="a" style="left:1012.5px;top:753.2px;width:95.0px;height:98.5px;border:2px solid #7A4FBE;border-left:none"></div>
<div class="a" style="left:1107.5px;top:755.2px;width:249.29999999999995px;height:96.5px;border:2px solid #2E62C9;border-left:none;border-top:none"></div>
<div class="a" style="left:1104.5px;top:729.5px;width:4px;height:4px;background:#C0303A"></div>
<div class="a" style="left:1353.8px;top:729.5px;width:4px;height:4px;background:#C0303A"></div>
<div class="a" style="left:1353.3px;top:752.2px;width:5px;height:5px;background:#C0303A"></div>
<div class="a" style="left:1104.0px;top:751.7px;width:5px;height:5px;background:#7A4FBE"></div>
<div class="a" style="left:1011.5px;top:752.2px;width:4px;height:4px;background:#7A4FBE"></div>
<div class="a" style="left:1011.5px;top:848.7px;width:4px;height:4px;background:#7A4FBE"></div>
<div class="a" style="left:1104.0px;top:848.2px;width:5px;height:5px;background:#7A4FBE"></div>
<div class="a" style="left:1353.3px;top:848.2px;width:5px;height:5px;background:#2E62C9"></div>
<div class="t" style="left:1110.0px;top:736.2px;font-size:15.5px;color:#000;letter-spacing:-0.15px">Series 1</div>
<div class="t" style="left:1193.0px;top:736.2px;font-size:15.5px;color:#000;letter-spacing:-0.15px">Series 2</div>
<div class="t" style="left:1276.0px;top:736.2px;font-size:15.5px;color:#000;letter-spacing:-0.15px">Series 3</div>
<div class="t" style="left:1016.0px;top:759.9px;font-size:15.5px;color:#000;letter-spacing:0.2px">Category 1</div>
<div class="t" style="left:1106.5px;top:759.9px;width:79.0px;text-align:right;font-size:15.5px;color:#000;letter-spacing:0.3px">4.3</div>
<div class="t" style="left:1189.5px;top:759.9px;width:79.0px;text-align:right;font-size:15.5px;color:#000;letter-spacing:0.3px">2.4</div>
<div class="t" style="left:1272.5px;top:759.9px;width:79.29999999999995px;text-align:right;font-size:15.5px;color:#000;letter-spacing:0.3px">2</div>
<div class="t" style="left:1016.0px;top:784.1px;font-size:15.5px;color:#000;letter-spacing:0.2px">Category 2</div>
<div class="t" style="left:1106.5px;top:784.1px;width:79.0px;text-align:right;font-size:15.5px;color:#000;letter-spacing:0.3px">2.5</div>
<div class="t" style="left:1189.5px;top:784.1px;width:79.0px;text-align:right;font-size:15.5px;color:#000;letter-spacing:0.3px">4.4</div>
<div class="t" style="left:1272.5px;top:784.1px;width:79.29999999999995px;text-align:right;font-size:15.5px;color:#000;letter-spacing:0.3px">2</div>
<div class="t" style="left:1016.0px;top:808.3px;font-size:15.5px;color:#000;letter-spacing:0.2px">Category 3</div>
<div class="t" style="left:1106.5px;top:808.3px;width:79.0px;text-align:right;font-size:15.5px;color:#000;letter-spacing:0.3px">3.5</div>
<div class="t" style="left:1189.5px;top:808.3px;width:79.0px;text-align:right;font-size:15.5px;color:#000;letter-spacing:0.3px">1.8</div>
<div class="t" style="left:1272.5px;top:808.3px;width:79.29999999999995px;text-align:right;font-size:15.5px;color:#000;letter-spacing:0.3px">3</div>
<div class="t" style="left:1016.0px;top:832.4px;font-size:15.5px;color:#000;letter-spacing:0.2px">Category 4</div>
<div class="t" style="left:1106.5px;top:832.4px;width:79.0px;text-align:right;font-size:15.5px;color:#000;letter-spacing:0.3px">4.5</div>
<div class="t" style="left:1189.5px;top:832.4px;width:79.0px;text-align:right;font-size:15.5px;color:#000;letter-spacing:0.3px">2.8</div>
<div class="t" style="left:1272.5px;top:832.4px;width:79.29999999999995px;text-align:right;font-size:15.5px;color:#000;letter-spacing:0.3px">5</div>
<div class="a" style="left:1462.5px;top:709.5px;width:18px;height:177px;background:#DADADA"></div>
<div class="a" style="left:1462.5px;top:709.5px;width:18px;height:18px;background:#fff;border:1px solid #C6C6C6"></div>
<svg style="left:1466px;top:714px" width="11" height="7" viewBox="0 0 11 7"><path d="M0.5 6.5L5.5 1L10.5 6.5Z" fill="#606060"/></svg>
<div class="a" style="left:1462.5px;top:728px;width:18px;height:41.5px;background:#fff;border:1px solid #C6C6C6"></div>
<div class="a" style="left:1462.5px;top:868.5px;width:18px;height:18px;background:#fff;border:1px solid #C6C6C6"></div>
<svg style="left:1466px;top:874px" width="11" height="7" viewBox="0 0 11 7"><path d="M0.5 0.5L5.5 6L10.5 0.5Z" fill="#606060"/></svg>
<div class="a" style="left:981.5px;top:893.5px;width:477px;height:18px;background:#DADADA"></div>
<div class="a" style="left:981.5px;top:893.5px;width:18.5px;height:18px;background:#fff;border:1px solid #C6C6C6"></div>
<svg style="left:987px;top:897px" width="7" height="11" viewBox="0 0 7 11"><path d="M6.5 0.5L1 5.5L6.5 10.5Z" fill="#606060"/></svg>
<div class="a" style="left:999.5px;top:893.5px;width:275px;height:18px;background:#fff;border:1px solid #C6C6C6"></div>
<div class="a" style="left:1440px;top:893.5px;width:18.5px;height:18px;background:#fff;border:1px solid #C6C6C6"></div>
<svg style="left:1446px;top:897px" width="7" height="11" viewBox="0 0 7 11"><path d="M0.5 0.5L6 5.5L0.5 10.5Z" fill="#606060"/></svg>
<svg style="left:1004px;top:639px" width="20" height="20" viewBox="0 0 20 20" fill="none" stroke="#5E9E78" stroke-width="1.3"><path d="M0.7 0.7H19.3V19.3H3.5L0.7 16.5Z"/><path d="M4.5 0.7V8H15.5V0.7"/><path d="M5.2 19.3V12.5H14.8V19.3"/></svg>
<svg style="left:1039px;top:638px" width="20" height="21" viewBox="0 0 22 20" fill="none" stroke="#5E9E78" stroke-width="1.4"><path d="M1 1V8H8"/><path d="M1.5 8L7 2.5C10 -0.5 15.5 0 17.5 3.5C19 6 18.5 9 16 11.5L7.5 20"/></svg>
<svg style="left:1066px;top:644px" width="9" height="6" viewBox="0 0 9 6" fill="none" stroke="#5E9E78" stroke-width="1.2"><path d="M0.5 0.8L4.5 4.8L8.5 0.8"/></svg>
<svg style="left:1087px;top:638px" width="20" height="21" viewBox="0 0 22 20" fill="none" stroke="#5E9E78" stroke-width="1.4"><path d="M21 1V8H14"/><path d="M20.5 8L15 2.5C12 -0.5 6.5 0 4.5 3.5C3 6 3.5 9 6 11.5L14.5 20"/></svg>
<svg style="left:1114px;top:644px" width="9" height="6" viewBox="0 0 9 6" fill="none" stroke="#5E9E78" stroke-width="1.2"><path d="M0.5 0.8L4.5 4.8L8.5 0.8"/></svg>
<svg style="left:1135px;top:639px" width="21" height="21" viewBox="0 0 21 21" fill="none" stroke="#A9D3B8" stroke-width="1.3"><path d="M19.3 8V0.7H0.7V19.3H8"/><path d="M0.7 4.6H19.3M0.7 9.4H8M0.7 14.3H8M7.4 4.6V19.3M13 4.6V8.5"/><rect x="8.9" y="9.4" width="11" height="10.5" fill="#A9D3B8" stroke="none"/><path d="M12.2 11.8L16.6 17.6M16.6 11.8L12.2 17.6" stroke="#217346" stroke-width="1.1"/></svg>
<div class="t" style="left:1174.5px;top:639.3px;font-size:14.5px;color:#A9D4B8;letter-spacing:0.1px">Chart in Microsoft PowerPoint</div>
<svg style="left:1448px;top:640px" width="14" height="14" viewBox="0 0 14 14" fill="none" stroke="#D8EDE0" stroke-width="1.4"><path d="M0.8 0.8L13.2 13.2M13.2 0.8L0.8 13.2"/></svg>
</body></html>
